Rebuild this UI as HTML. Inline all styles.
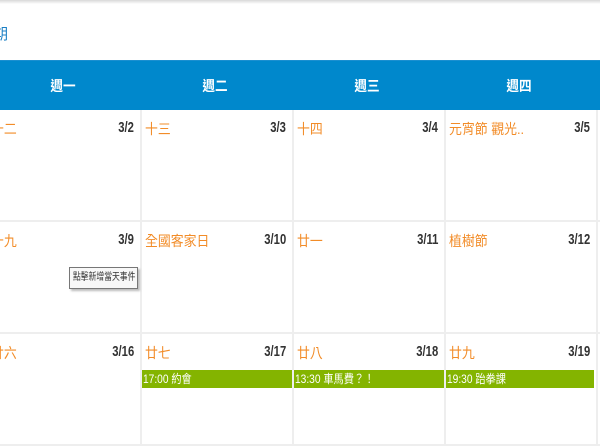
<!DOCTYPE html>
<html><head><meta charset="utf-8"><style>
*{margin:0;padding:0;box-sizing:border-box}
body{width:600px;height:400px;overflow:hidden;background:#fff;position:relative;font-family:"Liberation Sans","Noto Sans CJK TC",sans-serif}
.top{position:absolute;left:0;top:0;width:600px;height:4px;background:linear-gradient(#d8d8d8,#fff)}
.link{position:absolute;left:-7px;top:23px;color:#1a7fc4;font-size:15px}
.hdr{position:absolute;left:0;top:60px;width:600px;height:50px;background:#0088cc;border-top:1px solid #1a8fd0}
.hdr span{position:absolute;top:15px;color:#fff;font-size:14px;font-weight:bold;transform:translateX(-50%) scaleX(0.9)}
.cell{position:absolute;background:#fff;border-right:2px solid #eee;border-bottom:2px solid #eee}
.lun{position:absolute;left:3px;top:9px;color:#f28c28;font-size:14px;transform-origin:left;transform:scaleX(0.92);white-space:nowrap}
.dt{position:absolute;right:6px;top:9px;color:#333;font-size:15px;font-weight:bold;transform-origin:right;transform:scaleX(0.75)}
.ev{position:absolute;height:18px;top:370px;background:#84b400;color:#fff;font-size:12px;line-height:18px;padding-left:1px;white-space:nowrap;overflow:hidden}
.ev span{display:inline-block;transform-origin:left;transform:scaleX(0.85)}
.tip{position:absolute;left:69px;top:267px;width:69px;height:22px;border:1px solid #777;background:#f8f8f8;box-shadow:2px 2px 2px #bbb;font-size:10px;line-height:20px;color:#333;padding-left:3px;white-space:nowrap;overflow:hidden}
.tip span{display:inline-block;transform-origin:left;transform:scaleX(0.78)}
</style></head><body>
<div class="top"></div>
<div class="link">期</div>
<div class="hdr"><span style="left:63px">週一</span><span style="left:215px">週二</span><span style="left:367px">週三</span><span style="left:519px">週四</span></div>

<div class="cell" style="left:-12px;top:110px;width:154px;height:112px"><div class="lun">十二</div><div class="dt">3/2</div></div>
<div class="cell" style="left:142px;top:110px;width:152px;height:112px"><div class="lun">十三</div><div class="dt">3/3</div></div>
<div class="cell" style="left:294px;top:110px;width:152px;height:112px"><div class="lun">十四</div><div class="dt">3/4</div></div>
<div class="cell" style="left:446px;top:110px;width:152px;height:112px"><div class="lun">元宵節 觀光..</div><div class="dt">3/5</div></div>
<div class="cell" style="left:598px;top:110px;width:152px;height:112px"></div>

<div class="cell" style="left:-12px;top:222px;width:154px;height:112px"><div class="lun">十九</div><div class="dt">3/9</div></div>
<div class="cell" style="left:142px;top:222px;width:152px;height:112px"><div class="lun">全國客家日</div><div class="dt">3/10</div></div>
<div class="cell" style="left:294px;top:222px;width:152px;height:112px"><div class="lun">廿一</div><div class="dt">3/11</div></div>
<div class="cell" style="left:446px;top:222px;width:152px;height:112px"><div class="lun">植樹節</div><div class="dt">3/12</div></div>
<div class="cell" style="left:598px;top:222px;width:152px;height:112px"></div>

<div class="cell" style="left:-12px;top:334px;width:154px;height:112px"><div class="lun">廿六</div><div class="dt">3/16</div></div>
<div class="cell" style="left:142px;top:334px;width:152px;height:112px"><div class="lun">廿七</div><div class="dt">3/17</div></div>
<div class="cell" style="left:294px;top:334px;width:152px;height:112px"><div class="lun">廿八</div><div class="dt">3/18</div></div>
<div class="cell" style="left:446px;top:334px;width:152px;height:112px"><div class="lun">廿九</div><div class="dt">3/19</div></div>
<div class="cell" style="left:598px;top:334px;width:152px;height:112px"></div>

<div class="ev" style="left:142px;width:150px"><span>17:00 約會</span></div>
<div class="ev" style="left:294px;width:150px"><span>13:30 車馬費？！</span></div>
<div class="ev" style="left:446px;width:148px"><span>19:30 跆拳課</span></div>
<div class="tip"><span>點擊新增當天事件</span></div>
</body></html>
